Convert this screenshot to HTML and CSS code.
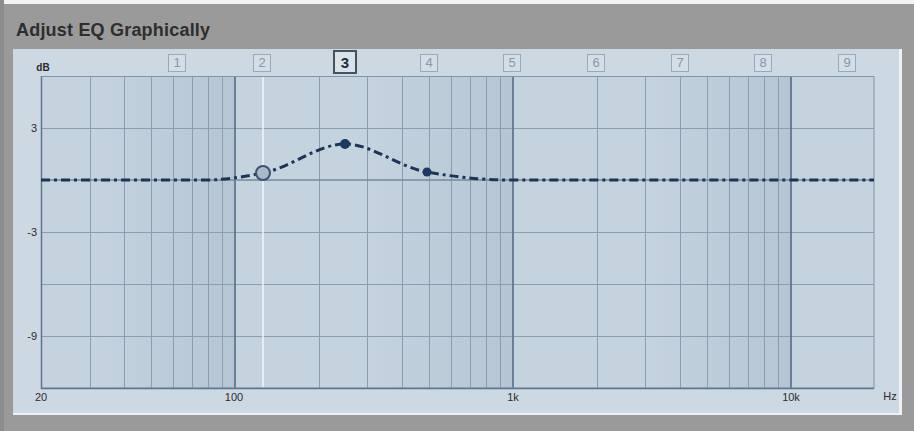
FILE: index.html
```html
<!DOCTYPE html>
<html lang="en">
<head>
<meta charset="UTF-8" />
<meta name="viewport" content="width=device-width, initial-scale=1" />
<title>Adjust EQ Graphically</title>
<link rel="stylesheet" href="styles.css">
</head>
<body>
  <div class="top-strip"></div>
  <div class="frame">
    <h1 class="title">Adjust EQ Graphically</h1>
    <div class="panel">
      <!-- log frequency axis: x = 41 + 278 * log10(f / 20) -->
      <svg class="eq" width="886" height="364" viewBox="13 49 886 364" aria-label="EQ curve">
        <defs>
          <linearGradient id="shade" x1="0" y1="0" x2="1" y2="0">
            <stop offset="0" stop-color="#5d7896" stop-opacity="0" />
            <stop offset="1" stop-color="#5d7896" stop-opacity="0.15" />
          </linearGradient>
        </defs>

        <rect class="plot-bg" x="41" y="76" width="833" height="312" />
        <rect x="90" y="76" width="145" height="312" fill="url(#shade)" />
        <rect x="368" y="76" width="145" height="312" fill="url(#shade)" />
        <rect x="646" y="76" width="145" height="312" fill="url(#shade)" />

        <g class="grid-h">
          <line x1="41" y1="128.5" x2="874" y2="128.5" />
          <line x1="41" y1="232.5" x2="874" y2="232.5" />
          <line x1="41" y1="284.5" x2="874" y2="284.5" />
          <line x1="41" y1="336.5" x2="874" y2="336.5" />
        </g>

        <g class="grid-v">
          <line x1="90.5" y1="76" x2="90.5" y2="388" />
          <line x1="124.5" y1="76" x2="124.5" y2="388" />
          <line x1="151.5" y1="76" x2="151.5" y2="388" />
          <line x1="173.5" y1="76" x2="173.5" y2="388" />
          <line x1="192.5" y1="76" x2="192.5" y2="388" />
          <line x1="208.5" y1="76" x2="208.5" y2="388" />
          <line x1="222.5" y1="76" x2="222.5" y2="388" />
          <line x1="319.5" y1="76" x2="319.5" y2="388" />
          <line x1="367.5" y1="76" x2="367.5" y2="388" />
          <line x1="402.5" y1="76" x2="402.5" y2="388" />
          <line x1="429.5" y1="76" x2="429.5" y2="388" />
          <line x1="451.5" y1="76" x2="451.5" y2="388" />
          <line x1="470.5" y1="76" x2="470.5" y2="388" />
          <line x1="486.5" y1="76" x2="486.5" y2="388" />
          <line x1="500.5" y1="76" x2="500.5" y2="388" />
          <line x1="597.5" y1="76" x2="597.5" y2="388" />
          <line x1="645.5" y1="76" x2="645.5" y2="388" />
          <line x1="680.5" y1="76" x2="680.5" y2="388" />
          <line x1="707.5" y1="76" x2="707.5" y2="388" />
          <line x1="729.5" y1="76" x2="729.5" y2="388" />
          <line x1="748.5" y1="76" x2="748.5" y2="388" />
          <line x1="764.5" y1="76" x2="764.5" y2="388" />
          <line x1="778.5" y1="76" x2="778.5" y2="388" />
        </g>

        <g class="grid-major">
          <line x1="235" y1="76" x2="235" y2="388" />
          <line x1="513" y1="76" x2="513" y2="388" />
          <line x1="791" y1="76" x2="791" y2="388" />
        </g>

        <!-- selected band frequency -->
        <line class="band-mark" x1="263" y1="76" x2="263" y2="388" />

        <rect class="plot-frame" x="41.5" y="76.5" width="832.5" height="311.5" />
        <line class="axis" x1="41.5" y1="76" x2="41.5" y2="389" />
        <line class="axis" x1="41" y1="388.5" x2="874" y2="388.5" />
        <line class="zero" x1="41" y1="180" x2="874" y2="180" />

        <path class="curve" d="M41,180 L205,180 C228,180 246,176 263,173 C292,167 318,144 345,144 C372,144 398,167 427,172 C455,177 480,180 512,180 L874,180" />

        <circle class="node-sel" cx="263" cy="173" r="7" />
        <circle class="node" cx="345" cy="144" r="5" />
        <circle class="node" cx="427" cy="172" r="4.5" />

        <g class="bands">
          <rect x="168.5" y="54.5" width="17" height="17" /><text x="177" y="67">1</text>
          <rect x="253.5" y="54.5" width="17" height="17" /><text x="262" y="67">2</text>
          <rect x="420.5" y="54.5" width="17" height="17" /><text x="429" y="67">4</text>
          <rect x="503.5" y="54.5" width="17" height="17" /><text x="512" y="67">5</text>
          <rect x="587.5" y="54.5" width="17" height="17" /><text x="596" y="67">6</text>
          <rect x="671.5" y="54.5" width="17" height="17" /><text x="680" y="67">7</text>
          <rect x="754.5" y="54.5" width="17" height="17" /><text x="763" y="67">8</text>
          <rect x="838.5" y="54.5" width="17" height="17" /><text x="847" y="67">9</text>
        </g>
        <g class="band-active">
          <rect x="334" y="51" width="22" height="22" /><text x="345" y="68">3</text>
        </g>

        <g class="labels">
          <text class="unit" x="43" y="71" text-anchor="middle">dB</text>
          <text x="37" y="132" text-anchor="end">3</text>
          <text x="37" y="236" text-anchor="end">-3</text>
          <text x="37" y="340" text-anchor="end">-9</text>
          <text x="41" y="401" text-anchor="middle">20</text>
          <text x="234" y="401" text-anchor="middle">100</text>
          <text x="513" y="401" text-anchor="middle">1k</text>
          <text x="791" y="401" text-anchor="middle">10k</text>
          <text x="890" y="400" text-anchor="middle">Hz</text>
        </g>
      </svg>
    </div>
  </div>
</body>
</html>
```

FILE: styles.css
```css
body {
  margin: 0;
  background: #9a9a9a;
  font-family: "Liberation Sans", Arial, sans-serif;
  height: 431px;
  overflow: hidden;
  border-left: 4px solid #8c8c8c;
  box-sizing: border-box;
}

.top-strip {
  height: 4px;
  background: #f2f2f2;
  margin-left: -4px;
}

.frame {
  padding-left: 9px;
}

.title {
  margin: 15px 0 8px 3px;
  font-size: 18px;
  line-height: 22px;
  font-weight: bold;
  color: #2e2e2e;
  letter-spacing: 0.2px;
}

.panel {
  width: 886px;
  height: 364px;
  background: #cdd9e2;
  border-right: 3px solid #eef1f3;
  border-bottom: 2px solid #eef1f3;
}

.eq {
  display: block;
}

.plot-bg {
  fill: #c5d3df;
}

.grid-h line,
.grid-v line {
  stroke: #8b9db0;
  stroke-width: 1;
}

.grid-major line {
  stroke: #5f7690;
  stroke-width: 1.8;
}

.band-mark {
  stroke: #eef3f7;
  stroke-width: 2;
  opacity: 0.8;
}

.plot-frame {
  fill: none;
  stroke: #8194a8;
  stroke-width: 1;
}

.axis {
  stroke: #5f7690;
  stroke-width: 1.5;
}

.zero {
  stroke: #76899d;
  stroke-width: 1.5;
}

.curve {
  fill: none;
  stroke: #1d3457;
  stroke-width: 3;
  stroke-dasharray: 9 4 3 4;
}

.node-sel {
  fill: #a9b9c8;
  stroke: #3e5270;
  stroke-width: 2;
}

.node {
  fill: #1e3866;
}

.bands rect {
  fill: #d3dee7;
  stroke: #99a9b9;
  stroke-width: 1;
}

.bands text {
  font-size: 13px;
  fill: #8797a9;
  text-anchor: middle;
}

.band-active rect {
  fill: #d8e2ea;
  stroke: #46525e;
  stroke-width: 2;
}

.band-active text {
  font-size: 15px;
  font-weight: bold;
  fill: #1f2b38;
  text-anchor: middle;
}

.labels text {
  font-size: 11px;
  fill: #2b2b2b;
}

.labels .unit {
  font-weight: bold;
  font-size: 10px;
}
```
